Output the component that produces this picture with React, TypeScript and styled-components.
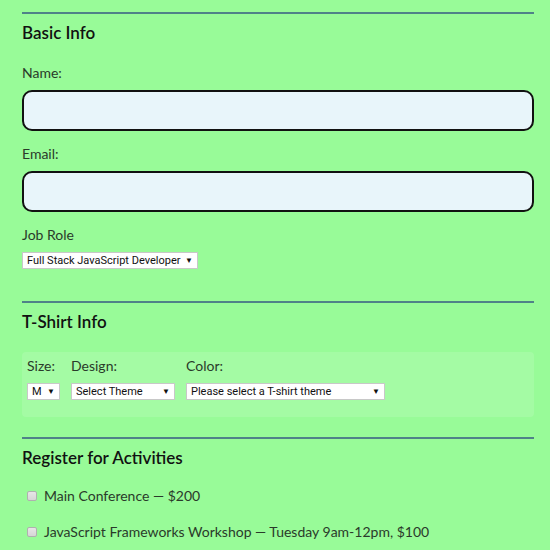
import React from "react";
import styled, { createGlobalStyle } from "styled-components";

const GlobalStyle = createGlobalStyle`
  html, body {
    margin: 0;
    padding: 0;
    background: #98fb98;
    overflow: hidden;
  }
  body {
    font-family: "Lato", "Noto Sans", sans-serif;
  }
`;

const sizes = ["S", "M", "L", "XL"];

function App() {
  return (
    <Page>
      <GlobalStyle />
      <Section $after={32}>
        <Rule />
        <Legend>Basic Info</Legend>
        <Label $top={21}>Name:</Label>
        <TextInput type="text" />
        <Label>Email:</Label>
        <TextInput type="email" />
        <Label>Job Role</Label>
        <SelectWrap $width={176}>
          <Select defaultValue="fs">
            <option value="fs">Full Stack JavaScript Developer</option>
          </Select>
        </SelectWrap>
      </Section>

      <Section $after={20}>
        <Rule />
        <Legend>T-Shirt Info</Legend>
        <ShirtBox>
          <ShirtField $width={33}>
            <SmallLabel>Size:</SmallLabel>
            <SelectWrap $width={33}>
              <Select defaultValue="M">
                {sizes.map((s) => (
                  <option key={s} value={s}>
                    {s}
                  </option>
                ))}
              </Select>
            </SelectWrap>
          </ShirtField>
          <ShirtField $width={104}>
            <SmallLabel>Design:</SmallLabel>
            <SelectWrap $width={104}>
              <Select defaultValue="x">
                <option value="x">Select Theme</option>
              </Select>
            </SelectWrap>
          </ShirtField>
          <ShirtField $width={199}>
            <SmallLabel>Color:</SmallLabel>
            <SelectWrap $width={199}>
              <Select defaultValue="x">
                <option value="x">Please select a T-shirt theme</option>
              </Select>
            </SelectWrap>
          </ShirtField>
        </ShirtBox>
      </Section>

      <Section $after={0}>
        <Rule />
        <Legend>Register for Activities</Legend>
        <Activity>
          <Check type="checkbox" />
          Main Conference — $200
        </Activity>
        <Activity>
          <Check type="checkbox" />
          JavaScript Frameworks Workshop — Tuesday 9am-12pm, $100
        </Activity>
      </Section>
    </Page>
  );
}

export default App;

const Page = styled.form`
  padding: 12px 16px 0 22px;
`;

const Section = styled.fieldset<{ $after: number }>`
  border: none;
  margin: 0 0 ${(p) => p.$after}px;
  padding: 0;
  min-width: 0;
`;

const Rule = styled.div`
  height: 2px;
  background: #4f8288;
`;

const Legend = styled.h2`
  margin: 9px 0 0;
  font-size: 17px;
  font-weight: 600;
  color: #111;
  line-height: 20px;
`;

const Label = styled.label<{ $top?: number }>`
  display: block;
  margin: ${(p) => p.$top ?? 14}px 0 8px;
  font-size: 14px;
  color: #2a3a2a;
  line-height: 18px;
`;

const TextInput = styled.input`
  display: block;
  box-sizing: border-box;
  width: 100%;
  height: 41px;
  margin: 0;
  background: #e8f5fa;
  border: 2px solid #111;
  border-radius: 10px;
  outline: none;
`;

const SelectWrap = styled.div<{ $width: number }>`
  position: relative;
  width: ${(p) => p.$width}px;
  height: 17px;

  &::after {
    content: "▼";
    position: absolute;
    right: 5px;
    top: 3px;
    font-size: 8px;
    line-height: 10px;
    color: #111;
    pointer-events: none;
  }
`;

const Select = styled.select`
  appearance: none;
  display: block;
  box-sizing: border-box;
  width: 100%;
  height: 100%;
  margin: 0;
  padding: 0 14px 0 4px;
  font-family: "Roboto", "Liberation Sans", sans-serif;
  font-size: 11px;
  color: #111;
  background: #fff;
  border: 1px solid #c8c8c8;
  border-radius: 0;
  outline: none;
`;

const ShirtBox = styled.div`
  display: flex;
  gap: 11px;
  margin-top: 20px;
  padding: 5px 5px 17px;
  background: #a4fba4;
  border-radius: 4px;
`;

const ShirtField = styled.div<{ $width: number }>`
  display: flex;
  flex-direction: column;
  gap: 8px;
  width: ${(p) => p.$width}px;
  white-space: nowrap;
`;

const SmallLabel = styled.span`
  font-size: 14px;
  color: #2a3a2a;
  line-height: 18px;
`;

const Activity = styled.label`
  display: flex;
  align-items: center;
  gap: 7px;
  margin: 19px 0 0 5px;
  font-size: 14px;
  color: #2a3a2a;
  line-height: 18px;
  & + & {
    margin-top: 18px;
  }
`;

const Check = styled.input`
  appearance: none;
  box-sizing: border-box;
  width: 10px;
  height: 10px;
  margin: 0;
  background: linear-gradient(#e6e6e6, #d6d6d6);
  border: 1px solid #b0b0b0;
  border-radius: 2px;
`;
